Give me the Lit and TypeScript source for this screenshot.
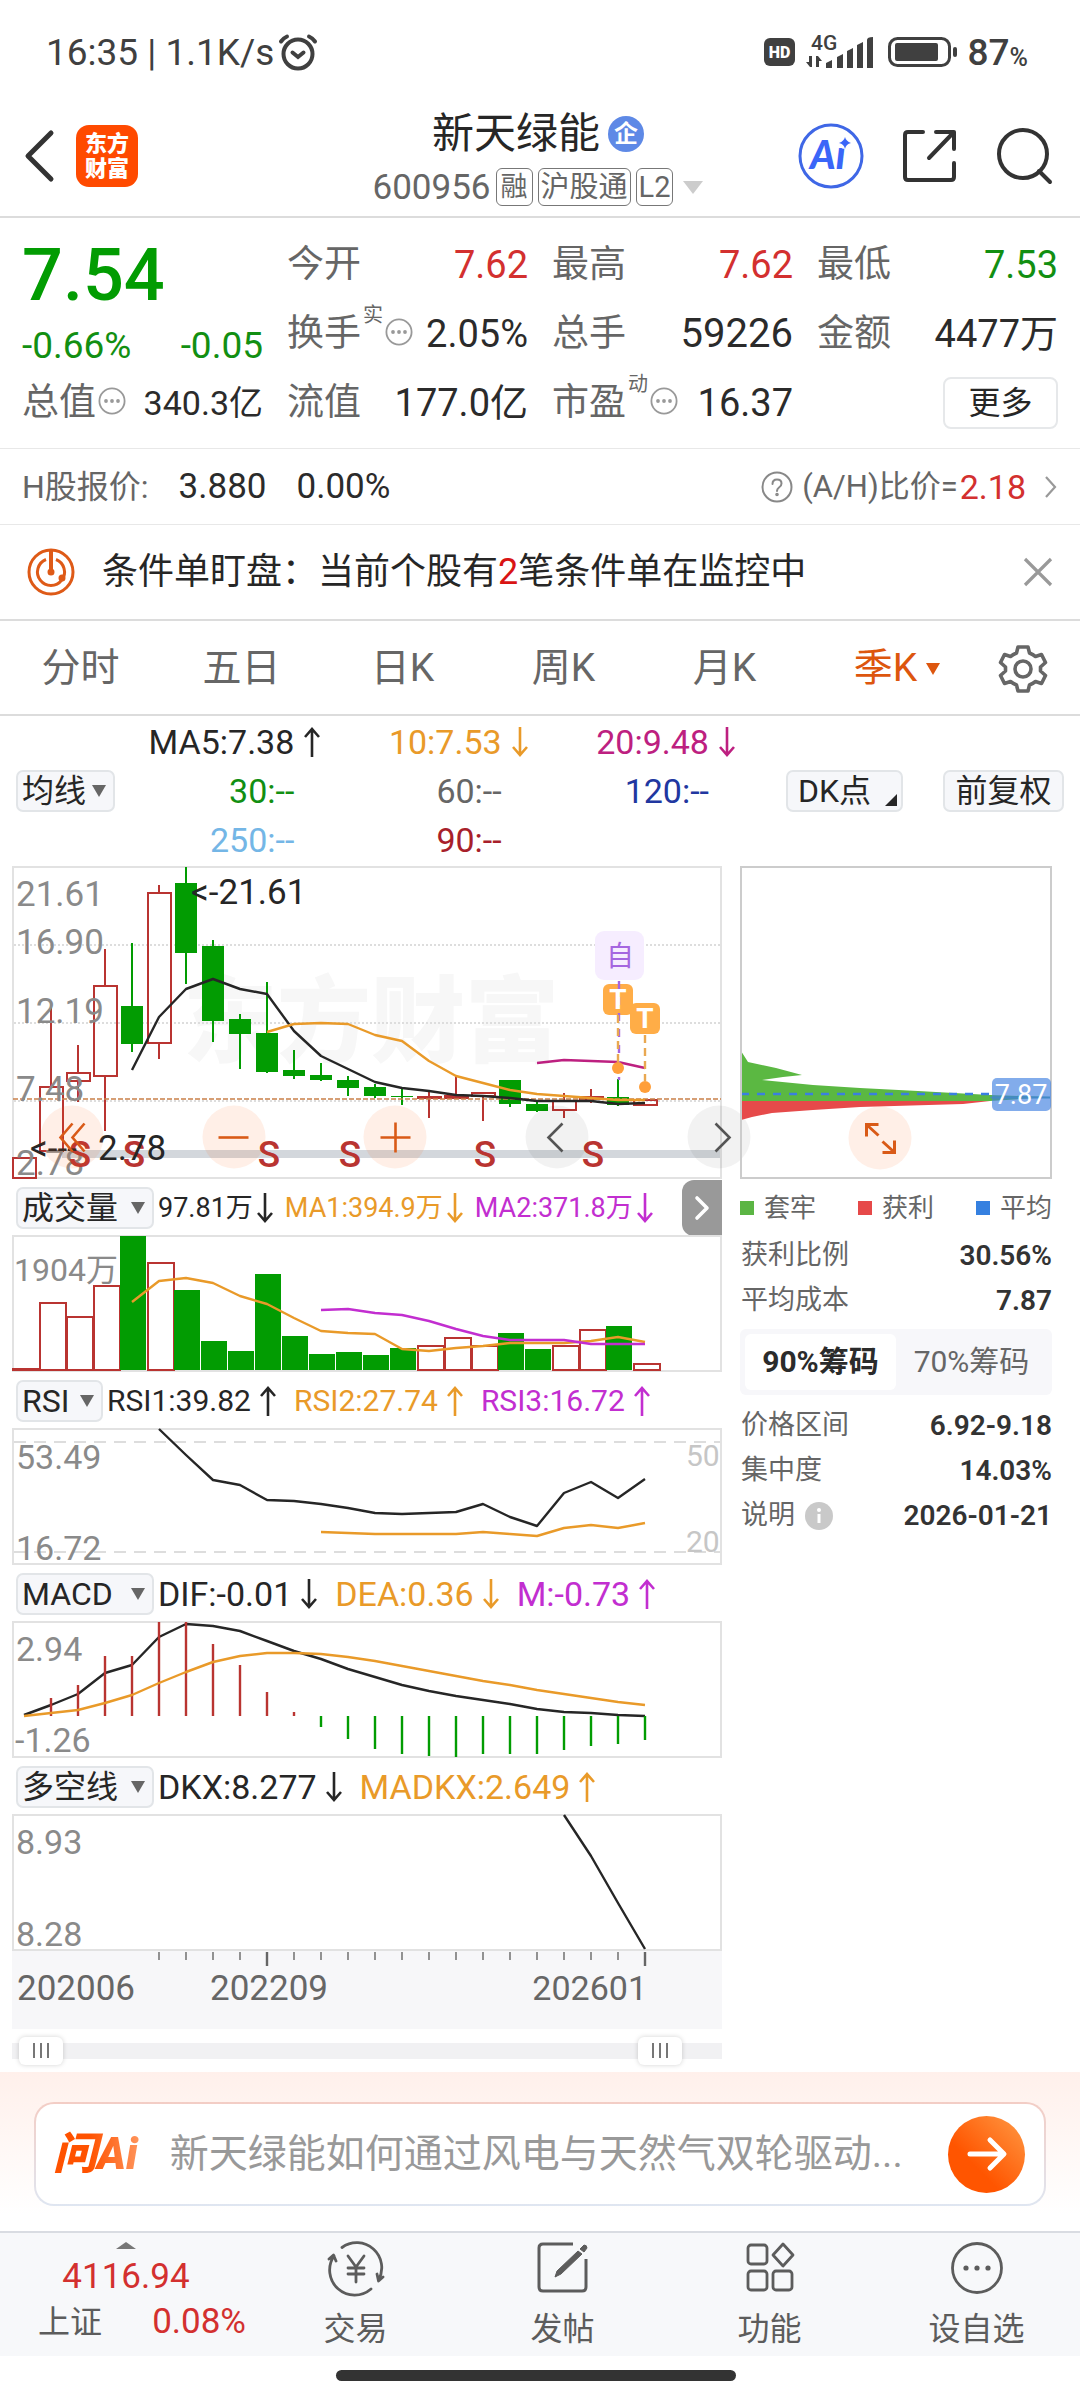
import { LitElement, html, svg, css } from 'lit';
import { customElement, state } from 'lit/decorators.js';
import { classMap } from 'lit/directives/class-map.js';

const RED = '#b93431';
const GREEN = '#029c02';
const INK = '#262626';
const ORANGE = '#e99a29';
const MAGENTA = '#bd2080';
const VIOLET = '#c22ed0';

const STEP = 27;
const cx = (i: number) => 24 + STEP * i;

const polyline = (start: number, ys: number[], color: string) => svg`
  <polyline fill="none" stroke=${color} stroke-width="2.4" stroke-linejoin="round"
    points=${ys.map((y, k) => `${cx(start + k)},${y}`).join(' ')}></polyline>`;

/* direction, high, body top, body bottom, low (chart units) */
type Candle = ['r' | 'g', number, number, number, number];
const CANDLES: Candle[] = [
  ['r', 1158, 1158, 1178, 1178],
  ['r', 1004, 1087, 1151, 1151],
  ['r', 1045, 1073, 1081, 1102],
  ['r', 949, 986, 1076, 1131],
  ['g', 943, 1006, 1044, 1052],
  ['r', 885, 893, 1043, 1059],
  ['g', 867, 883, 953, 984],
  ['g', 940, 946, 1021, 1042],
  ['g', 1014, 1019, 1034, 1069],
  ['g', 982, 1033, 1072, 1073],
  ['g', 1050, 1070, 1076, 1079],
  ['g', 1063, 1075, 1080, 1081],
  ['g', 1076, 1080, 1088, 1096],
  ['g', 1084, 1087, 1096, 1098],
  ['g', 1088, 1096, 1097, 1105],
  ['r', 1092, 1097, 1098, 1118],
  ['r', 1076, 1096, 1098, 1099],
  ['r', 1092, 1093, 1096, 1121],
  ['g', 1080, 1080, 1104, 1107],
  ['g', 1101, 1104, 1111, 1112],
  ['r', 1093, 1101, 1110, 1118],
  ['r', 1089, 1097, 1099, 1103],
  ['g', 1079, 1097, 1105, 1106],
  ['r', 1100, 1100, 1105, 1105],
];
const MA5 = [1070, 1017, 989, 979, 989, 994, 1031, 1056, 1069, 1082, 1088, 1091, 1095, 1096, 1098, 1101, 1101, 1101, 1104, 1103];
const MA10 = [1032, 1024, 1023, 1024, 1035, 1041, 1061, 1076, 1083, 1090, 1094, 1096, 1098, 1100, 1100];
const MA20 = [1063, 1060, 1061, 1062, 1068];

const VOLUME: ['r' | 'g', number][] = [
  ['r', 1369], ['r', 1303], ['r', 1317], ['r', 1286], ['g', 1236], ['r', 1263],
  ['g', 1290], ['g', 1341], ['g', 1351], ['g', 1274], ['g', 1336], ['g', 1354],
  ['g', 1352], ['g', 1355], ['g', 1348], ['r', 1346], ['r', 1338], ['r', 1346],
  ['g', 1333], ['g', 1349], ['r', 1346], ['r', 1330], ['g', 1326], ['r', 1364],
];
const VMA1 = [1302, 1281, 1278, 1283, 1296, 1304, 1318, 1331, 1333, 1334, 1349, 1351, 1348, 1346, 1343, 1343, 1343, 1341, 1337, 1342];
const VMA2 = [1310, 1309, 1313, 1315, 1321, 1329, 1336, 1340, 1340, 1340, 1344, 1344, 1344];

const RSI1 = [1429, 1455, 1480, 1485, 1500, 1501, 1504, 1508, 1513, 1514, 1513, 1512, 1504, 1517, 1526, 1493, 1482, 1498, 1479];
const RSI2 = [1532, 1533, 1534, 1534, 1534, 1534, 1532, 1534, 1536, 1528, 1525, 1528, 1523];

const HIST = [1716, 1698, 1685, 1656, 1656, 1622, 1622, 1644, 1665, 1692, 1712, 1727, 1739, 1749, 1754, 1756, 1757, 1754, 1754, 1754, 1750, 1746, 1744, 1740];
const DIF = [1715, 1705, 1694, 1673, 1665, 1637, 1624, 1626, 1631, 1641, 1651, 1659, 1669, 1677, 1685, 1691, 1696, 1700, 1704, 1709, 1712, 1713, 1715, 1716];
const DEA = [1716, 1713, 1710, 1703, 1695, 1683, 1672, 1662, 1656, 1653, 1653, 1654, 1657, 1661, 1666, 1671, 1676, 1681, 1685, 1690, 1694, 1698, 1702, 1705];

interface Reading { text: string; dir: 'up' | 'down'; color: string }

const arrow = (dir: 'up' | 'down') => html`
  <svg class="arrow" viewBox="0 0 16 32" aria-hidden="true">
    <path fill="none" stroke="currentColor" stroke-width="2.6"
      d=${dir === 'up' ? 'M8 31V3M1 11L8 3L15 11' : 'M8 1V29M1 21L8 29L15 21'}></path>
  </svg>`;

const dots = html`
  <svg class="dots" viewBox="0 0 28 28" aria-hidden="true">
    <circle cx="14" cy="14" r="12.6" fill="none" stroke="#999" stroke-width="1.8"></circle>
    <circle cx="8" cy="14" r="1.9" fill="#999"></circle>
    <circle cx="14" cy="14" r="1.9" fill="#999"></circle>
    <circle cx="20" cy="14" r="1.9" fill="#999"></circle>
  </svg>`;

@customElement('app-root')
export class AppRoot extends LitElement {
  @state() private period = '季K';
  @state() private share = '90';

  static styles = css`
    :host {
      display: block;
      background: #fff;
      color: #262626;
      font-family: Roboto, 'Noto Sans CJK SC', sans-serif;
      font-size: 32px;
      line-height: 1;
    }
    * { box-sizing: border-box; }
    button, select, input {
      font: inherit;
      color: inherit;
      margin: 0;
      padding: 0;
      border: 0;
      background: none;
    }
    svg { display: block; flex: none; overflow: visible; }
    a { color: inherit; text-decoration: none; }
    dl, dd, dt, h1, p { margin: 0; font-weight: 400; }
    .red { color: #d3302f; }
    .green { color: #128f12; }

    .status {
      display: flex;
      align-items: center;
      height: 104px;
      padding: 0 52px 0 46px;
      color: #404040;
      font-size: 38px;
      font-weight: 500;
    }
    .status .clock { font-size: 37px; font-weight: 400; }
    .status .alarm { width: 40px; height: 40px; margin-left: 4px; }
    .status .radio { width: 196px; height: 36px; margin-left: auto; }
    .status .battery { margin-left: 8px; font-size: 37px; }
    .status small { font-size: 25px; padding-top: 10px; }

    .header {
      display: grid;
      grid-template-columns: 1fr auto 1fr;
      align-items: center;
      height: 114px;
      padding: 0 28px 8px 24px;
      border-bottom: 2px solid #dcdcdc;
    }
    .header .start, .header .end { display: flex; align-items: center; }
    .header .start { gap: 20px; }
    .header .end { justify-content: flex-end; gap: 39px; }
    .logo {
      display: grid;
      place-content: center;
      width: 62px;
      height: 62px;
      border-radius: 13px;
      background: #ff4a00;
      color: #fff;
      font-size: 22px;
      line-height: 25px;
      font-weight: 900;
    }
    .title { display: flex; align-items: center; justify-content: center; gap: 8px; }
    .title h1 { font-size: 42px; line-height: 56px; }
    .badge {
      display: grid;
      place-content: center;
      width: 36px;
      height: 36px;
      border-radius: 50%;
      background: #5e89e6;
      color: #fff;
      font-size: 24px;
      font-weight: 700;
    }
    .code {
      display: flex;
      align-items: center;
      justify-content: center;
      gap: 5px;
      margin-top: 6px;
      color: #666;
      font-size: 35px;
    }
    .tag {
      height: 38px;
      padding: 0 4px;
      border: 1px solid #777;
      border-radius: 6px;
      font-size: 27px;
      line-height: 36px;
    }
    .tag.wide { font-size: 29px; padding: 0 2px; }
    .code svg { margin-left: 5px; }

    .quote {
      display: grid;
      grid-template-columns: repeat(4, 1fr);
      grid-auto-rows: 69px;
      column-gap: 24px;
      padding: 12px 22px 11px;
      border-bottom: 1px solid #e8e8e8;
    }
    .quote .lead { grid-row: 1 / 4; display: grid; grid-template-rows: 92px 46px 69px; align-items: center; }
    .price { font-size: 72px; font-weight: 500; color: #029c02; }
    .change { display: flex; justify-content: space-between; font-size: 37px; }
    .cell { display: flex; align-items: center; justify-content: space-between; font-size: 40px; }
    .cell dt { display: flex; align-items: center; color: #666; font-size: 37px; }
    .cell dd { color: #2b2b2b; }
    .cell dd.red { color: #d3302f; }
    .cell dd.green { color: #128f12; }
    .cell dd.tight { font-size: 34px; }
    .cell dd.snug { font-size: 38px; }
    .cell sup { align-self: flex-start; font-size: 20px; line-height: 20px; margin: -10px 0 0 2px; vertical-align: top; }
    .dots { width: 28px; height: 28px; margin: 0 0 4px 2px; }
    .more {
      justify-self: end;
      align-self: center;
      width: 115px;
      height: 52px;
      border: 2px solid #e6e8ea;
      border-radius: 8px;
      font-size: 32px;
    }

    .hshare {
      display: flex;
      align-items: center;
      height: 76px;
      padding: 0 22px;
      border-bottom: 1px solid #e8e8e8;
      color: #666;
      font-size: 32px;
    }
    .hshare b { font-weight: 400; font-size: 35px; color: #2b2b2b; margin-left: 30px; }
    .hshare a { display: flex; align-items: center; margin-left: auto; font-size: 31px; }
    .hshare a b { font-size: 34px; color: #d3302f; margin: 0 18px 0 2px; }
    .hshare .help { margin-right: 9px; }

    .notice {
      display: flex;
      align-items: center;
      height: 96px;
      padding: 0 28px 0 27px;
      border-bottom: 2px solid #dcdcdc;
      font-size: 36px;
    }
    .notice p { margin: 0 auto 0 27px; }
    .notice em { font-style: normal; color: #d91414; }

    .tabs {
      display: grid;
      grid-template-columns: repeat(6, 1fr) 114px;
      height: 95px;
      padding-top: 2px;
      border-bottom: 2px solid #dcdcdc;
      color: #666;
      font-size: 39px;
    }
    .tabs button { position: relative; display: flex; align-items: center; justify-content: center; cursor: pointer; }
    .tabs .on { color: #dd560e; }
    .tabs .on svg { position: absolute; right: 26px; }

    .averages {
      display: flex;
      align-items: center;
      height: 150px;
      padding: 0 16px;
    }
    .averages ul {
      flex: 1;
      display: grid;
      grid-template-columns: repeat(3, 1fr);
      grid-auto-rows: 49px;
      align-items: center;
      margin: 0 49px 0 0;
      padding: 0;
      list-style: none;
      font-size: 34px;
    }
    .averages li { display: flex; align-items: center; justify-content: flex-end; padding-right: 28px; }
    .averages li.moving { padding-right: 2px; }
    .arrow { width: 16px; height: 32px; margin-left: 10px; }
    .chip {
      position: relative;
      height: 42px;
      border: 2px solid #e2e5e8;
      border-radius: 7px;
      background: #f6f7fa;
      font-size: 32px;
      line-height: 36px;
      white-space: nowrap;
    }
    .chip.dk { width: 117px; padding-right: 20px; margin-right: 40px; }
    .chip.dk svg { position: absolute; right: 4px; bottom: 4px; }
    .chip.fq { width: 121px; }
    .drop { position: relative; display: flex; align-items: center; }
    .drop select {
      appearance: none;
      width: 100%;
      height: 42px;
      padding: 0 0 0 4px;
      border: 2px solid #e2e5e8;
      border-radius: 7px;
      background: #f6f7fa;
      font-size: 32px;
      line-height: 38px;
    }
    .drop svg { position: absolute; right: 9px; pointer-events: none; }
    .drop.s { width: 87px; }
    .drop.m { width: 99px; }
    .drop.l { width: 138px; }

    .board {
      display: grid;
      grid-template-columns: 710fr 312fr;
      column-gap: 18px;
      align-items: start;
      padding: 0 28px 0 12px;
    }
    .plot { width: 100%; height: auto; }
    .stage { position: relative; z-index: 1; }
    .knob {
      position: absolute;
      display: grid;
      place-content: center;
      width: 63px;
      height: 63px;
      border-radius: 50%;
      transform: translate(-50%, -50%);
      background: rgba(255, 96, 20, 0.1);
      color: #d95a17;
      cursor: pointer;
    }
    .knob.grey { background: rgba(0, 0, 0, 0.05); color: #555; }
    .chips .knob { left: 45%; top: 87%; }

    .panel-head { display: flex; align-items: center; height: 56px; padding: 2px 0 0 4px; font-size: 34px; }
    .reading { display: flex; align-items: center; margin-right: 18px; white-space: nowrap; }
    .drop + .reading { margin-left: 4px; }
    .panel-head .arrow { margin-left: 9px; }
    .panel-head.medium { font-size: 30px; }
    .panel-head.compact { font-size: 27px; }
    .compact .reading { margin-right: 12px; }
    .compact .arrow { margin-left: 4px; }
    .next {
      display: grid;
      place-content: center;
      width: 40px;
      height: 56px;
      margin-left: auto;
      border-radius: 12px 0 0 12px;
      background: #999;
    }

    .range { display: grid; align-items: center; height: 43px; background: linear-gradient(#f1f1f3, #f1f1f3) center / 100% 16px no-repeat; border-radius: 8px; }
    .range input {
      grid-area: 1 / 1;
      appearance: none;
      width: 100%;
      height: 28px;
      pointer-events: none;
    }
    .range input::-webkit-slider-thumb {
      appearance: none;
      pointer-events: auto;
      width: 44px;
      height: 28px;
      border-radius: 6px;
      background:
        linear-gradient(#777, #777) 14px center / 2px 15px no-repeat,
        linear-gradient(#777, #777) 21px center / 2px 15px no-repeat,
        linear-gradient(#777, #777) 28px center / 2px 15px no-repeat,
        #fff;
      box-shadow: 0 0 5px rgba(0, 0, 0, 0.18);
    }

    .chips .legend { display: flex; justify-content: space-between; align-items: center; height: 53px; padding-top: 4px; color: #666; font-size: 26px; }
    .legend span { display: flex; align-items: center; gap: 10px; }
    .legend i { width: 14px; height: 14px; }
    .legend .trapped { background: #5bb544; }
    .legend .profit { background: #e64949; }
    .legend .mean { background: #3580e0; }
    .facts div { display: flex; align-items: center; justify-content: space-between; height: 45px; padding-top: 2px; }
    .facts dt { display: flex; align-items: center; gap: 10px; padding-left: 1px; color: #666; font-size: 27px; }
    .facts dd { font-size: 28px; font-weight: 600; color: #333; }
    .switch {
      display: grid;
      grid-template-columns: 150fr 150fr;
      height: 66px;
      margin: 7px 0;
      padding: 5px;
      border-radius: 6px;
      background: #f7f7fa;
      color: #666;
      font-size: 30px;
    }
    .switch button { border-radius: 6px; white-space: nowrap; }
    .switch .on { background: #fff; color: #2b2b2b; font-weight: 700; }

    .ask { height: 159px; padding: 30px 34px 0; background: linear-gradient(#fff0eb, #fff 90%); }
    .ask form {
      display: flex;
      align-items: center;
      height: 104px;
      padding: 0 19px 0 17px;
      border: 2px solid transparent;
      border-radius: 20px;
      background: linear-gradient(#fff, #fff) padding-box, linear-gradient(#f3cdc5, #dfe6f1) border-box;
    }
    .wordmark {
      padding-right: 6px;
      font-size: 44px;
      line-height: 52px;
      font-weight: 900;
      font-style: italic;
      background: linear-gradient(90deg, #ff5200 40%, #ff9a63);
      background-clip: text;
      -webkit-background-clip: text;
      color: transparent;
    }
    .ask input { flex: 1; min-width: 0; height: 60px; margin: 0 20px 0 26px; font-size: 39px; outline: 0; }
    .ask input::placeholder { color: #999; opacity: 1; }
    .send {
      display: grid;
      place-content: center;
      width: 77px;
      height: 77px;
      border-radius: 50%;
      background: linear-gradient(225deg, #ff9a45, #ff5500 65%);
    }

    .nav {
      display: grid;
      grid-template-columns: 252fr repeat(4, 207fr);
      height: 125px;
      border-top: 2px solid #d9dce2;
      background: #f7f8fa;
      color: #5c5c5c;
      font-size: 32px;
    }
    .nav a { display: flex; flex-direction: column; align-items: center; padding-top: 7px; }
    .nav a > svg { width: 56px; height: 56px; margin-bottom: 17px; }
    .nav .index > svg { width: 20px; height: 7px; margin: 2px 0 10px; }
    .index b { font-weight: 400; font-size: 35px; color: #d3302f; }
    .index span { display: flex; align-self: flex-end; justify-content: space-between; align-items: center; width: 214px; margin-top: 10px; padding-right: 6px; }
    .home { display: flex; justify-content: center; align-items: flex-start; height: 44px; padding: 14px 8px 0 0; }
    .home i { width: 400px; height: 11px; border-radius: 6px; background: #333; }
  `;

  private caret(color: string) {
    return html`<svg width="14" height="12" viewBox="0 0 14 12" aria-hidden="true"><path fill=${color} d="M0 0H14L7 12Z"></path></svg>`;
  }

  private drop(label: string, size: string) {
    return html`
      <label class="drop ${size}">
        <select aria-label="${label}"><option>${label}</option></select>
        ${this.caret('#666')}
      </label>`;
  }

  private readings(items: Reading[]) {
    return items.map(
      (r) => html`<span class="reading" style="color:${r.color}">${r.text}${arrow(r.dir)}</span>`,
    );
  }

  private frame(y: number, h: number) {
    return svg`<rect x="13" y=${y + 1} width="708" height=${h - 2} fill="none" stroke="#e2e2e2" stroke-width="2"></rect>`;
  }

  private label(x: number, y: number, text: string, size = 34, fill = '#8a8a8a') {
    return svg`<text x=${x} y=${y} font-size=${size} fill=${fill}>${text}</text>`;
  }

  private renderStatus() {
    return html`
      <div class="status">
        <span class="clock">16:35 | 1.1K/s</span>
        <svg class="alarm" viewBox="0 0 40 40" fill="none" stroke="#404040" stroke-linecap="round" aria-hidden="true">
          <circle cx="20" cy="22" r="14.5" stroke-width="4"></circle>
          <path stroke-width="4" d="M14.500 20.500L20 25L25.500 20.500M3 9.500Q5.500 6 9 4.500M37 9.500Q34.500 6 31 4.500"></path>
        </svg>
        <svg class="radio" viewBox="0 0 196 36" aria-hidden="true">
          <rect x="0" y="4" width="31" height="28" rx="6" fill="#404040"></rect>
          <text x="15.500" y="24" font-size="16" font-weight="900" text-anchor="middle" fill="#fff">HD</text>
          <text x="47" y="16" font-size="21" fill="#404040">4G</text>
          <g fill="#404040">
            <path d="M48 22v11h-2l-4-5h3v-6zM52 33V22h2l4 5h-3v6z"></path>
            <path d="M62 34v-5l6-3v8zM73 34V23l6-3v14zM83 34V17l6-3v20zM93 34V11l6-3v26zM103 34V6q0-3 6-3v31z"></path>
            <rect x="131" y="9" width="43" height="18" rx="2"></rect>
            <rect x="189" y="13" width="4" height="10" rx="2"></rect>
          </g>
          <rect x="125.500" y="4.500" width="60" height="27" rx="8" fill="none" stroke="#404040" stroke-width="3"></rect>
        </svg>
        <span class="battery">87</span><small>%</small>
      </div>`;
  }

  private renderHeader() {
    return html`
      <header class="header">
        <div class="start">
          <button aria-label="返回">
            <svg width="32" height="54" viewBox="0 0 32 54"><path fill="none" stroke="#333" stroke-width="5" stroke-linecap="round" stroke-linejoin="round" d="M27 4L4 27L27 50"></path></svg>
          </button>
          <a class="logo" href="#home"><span>东方</span><span>财富</span></a>
        </div>
        <div>
          <div class="title"><h1>新天绿能</h1><span class="badge">企</span></div>
          <div class="code">
            <span>600956</span><span class="tag">融</span><span class="tag wide">沪股通</span><span class="tag wide">L2</span>
            <svg width="20" height="13" viewBox="0 0 20 13" aria-hidden="true"><path fill="#ccc" d="M0 0H20L10 13Z"></path></svg>
          </div>
        </div>
        <div class="end">
          <button aria-label="Ai">
            <svg width="66" height="66" viewBox="0 0 66 66">
              <circle cx="33" cy="33" r="31" fill="none" stroke="#3f67e6" stroke-width="3"></circle>
              <text x="12" y="46" font-family="Lato, Roboto, sans-serif" font-size="39" font-weight="900" font-style="italic" fill="#3a66f8">Ai</text>
              <circle cx="47" cy="19" r="7" fill="#fff"></circle>
              <path fill="#3a66f8" d="M47 14q1 4 6 6q-5 1-6 6q-1-5-6-6q5-2 6-6z"></path>
            </svg>
          </button>
          <button aria-label="分享">
            <svg width="54" height="54" viewBox="0 0 54 54" fill="none" stroke="#333" stroke-width="4" stroke-linecap="round" stroke-linejoin="round">
              <path d="M20 3H5Q2 3 2 6V48Q2 51 5 51H48Q51 51 51 48V34M33 3H51V20M51 3L26 29"></path>
            </svg>
          </button>
          <button aria-label="搜索">
            <svg width="56" height="56" viewBox="0 0 56 56" fill="none" stroke="#333" stroke-width="4" stroke-linecap="round">
              <circle cx="27" cy="26" r="24"></circle><path d="M43 43L54 54"></path>
            </svg>
          </button>
        </div>
      </header>`;
  }

  private cell(label: string, value: string, tone = '', note = '', info = false) {
    return html`
      <div class="cell">
        <dt>${label}${note ? html`<sup>${note}</sup>` : ''}${info ? dots : ''}</dt>
        <dd class=${tone}>${value}</dd>
      </div>`;
  }

  private renderQuote() {
    return html`
      <dl class="quote">
        <div class="lead">
          <div class="price">7.54</div>
          <div class="change green"><span>-0.66%</span><span>-0.05</span></div>
          ${this.cell('总值', '340.3亿', 'tight', '', true)}
        </div>
        ${this.cell('今开', '7.62', 'snug red')}
        ${this.cell('最高', '7.62', 'snug red')}
        ${this.cell('最低', '7.53', 'snug green')}
        ${this.cell('换手', '2.05%', 'snug', '实', true)}
        ${this.cell('总手', '59226')}
        ${this.cell('金额', '4477万', 'snug')}
        ${this.cell('流值', '177.0亿', 'snug')}
        ${this.cell('市盈', '16.37', 'snug', '动', true)}
        <button class="more">更多</button>
      </dl>
      <div class="hshare">
        <span>H股报价:</span><b>3.880</b><b>0.00%</b>
        <a href="#ah">
          <svg class="help" width="32" height="32" viewBox="0 0 32 32" fill="none" stroke="#888" stroke-width="2" aria-hidden="true">
            <circle cx="16" cy="16" r="14.500"></circle>
            <path stroke-linecap="round" d="M11.500 13Q11.500 8.500 16 8.500T20.500 12.500Q20.500 15 18 16.500Q16 18 16 20"></path>
            <circle cx="16" cy="23.500" r="0.800"></circle>
          </svg>
          <span>(A/H)比价=</span><b>2.18</b>
          <svg width="14" height="24" viewBox="0 0 14 24" aria-hidden="true"><path fill="none" stroke="#999" stroke-width="2.200" d="M2 2L11 12L2 22"></path></svg>
        </a>
      </div>
      <div class="notice">
        <svg width="48" height="48" viewBox="0 0 48 48" fill="none" stroke="#de5a17" aria-hidden="true">
          <circle cx="24" cy="24" r="22" stroke-width="3"></circle>
          <path stroke-width="3" d="M19 11.500A13.500 13.500 0 1 0 29 11.500"></path>
          <path stroke-width="4" d="M24 3V24"></path>
          <circle cx="24" cy="24" r="2.500" fill="#de5a17" stroke-width="2"></circle>
          <circle cx="35" cy="30" r="2.500" fill="#de5a17" stroke-width="2"></circle>
        </svg>
        <p>条件单盯盘：当前个股有<em>2</em>笔条件单在监控中</p>
        <button aria-label="关闭">
          <svg width="28" height="28" viewBox="0 0 28 28"><path stroke="#999" stroke-width="3.200" d="M1 1L27 27M27 1L1 27"></path></svg>
        </button>
      </div>`;
  }

  private renderTabs() {
    const names = ['分时', '五日', '日K', '周K', '月K', '季K'];
    return html`
      <nav class="tabs">
        ${names.map((n) => html`
          <button class=${classMap({ on: n === this.period })} @click=${() => (this.period = n)}>
            ${n}${n === '季K' ? this.caret('currentColor') : ''}
          </button>`)}
        <button aria-label="设置">
          <svg width="50" height="50" viewBox="0 0 50 50" fill="none" stroke="#666" stroke-width="3.600" stroke-linejoin="round">
            <path d="M20 3H30L31.500 9Q35 10.500 37.500 12.500L43.500 10.500L47.500 18.500L42.500 23V27L47.500 31.500L43.500 39.500L37.500 37.500Q35 39.500 31.500 41L30 47H20L18.500 41Q15 39.500 12.500 37.500L6.500 39.500L2.500 31.500L7.500 27V23L2.500 18.500L6.500 10.500L12.500 12.500Q15 10.500 18.500 9Z"></path>
            <circle cx="25" cy="25" r="8"></circle>
          </svg>
        </button>
      </nav>
      <div class="averages">
        ${this.drop('均线', 'm')}
        <ul>
          <li class="moving">MA5:7.38${arrow('up')}</li>
          <li class="moving" style="color:${ORANGE}">10:7.53${arrow('down')}</li>
          <li class="moving" style="color:${MAGENTA}">20:9.48${arrow('down')}</li>
          <li class="green">30:--</li>
          <li style="color:#666">60:--</li>
          <li style="color:#2137a0">120:--</li>
          <li style="color:#74b6e6">250:--</li>
          <li style="color:#a81f2b">90:--</li>
        </ul>
        <button class="chip dk">DK点<svg width="12" height="12" viewBox="0 0 12 12" aria-hidden="true"><path fill="#262626" d="M12 0V12H0Z"></path></svg></button>
        <button class="chip fq">前复权</button>
      </div>`;
  }

  private renderCandles() {
    return svg`${CANDLES.map(([d, hi, top, bot, lo], i) => {
      const x = cx(i);
      return d === 'g'
        ? svg`<path stroke=${GREEN} stroke-width="2" d="M${x} ${hi}V${lo}"></path>
              <rect x=${x - 11} y=${top} width="22" height=${bot - top} fill=${GREEN}></rect>`
        : svg`<path stroke=${RED} stroke-width="2" d="M${x} ${hi}V${top}M${x} ${bot}V${lo}"></path>
              <rect x=${x - 11} y=${top} width="23" height=${bot - top} fill="none" stroke=${RED} stroke-width="2"></rect>`;
    })}`;
  }

  private renderMain() {
    const knobs = [
      { x: 8.5, name: '最早', grey: false, d: 'M16 2L4 16L16 30M28 2L16 16L28 30' },
      { x: 31.2, name: '缩小', grey: false, d: 'M1 16H31' },
      { x: 54, name: '放大', grey: false, d: 'M1 16H31M16 1V31' },
      { x: 76.7, name: '向前', grey: true, d: 'M22 2L8 16L22 30' },
      { x: 99.6, name: '向后', grey: true, d: 'M12 2L26 16L12 30' },
    ];
    return html`
      <div class="stage">
        <svg class="plot" viewBox="12 866 710 313">
          <text x="183" y="1055" font-size="94" font-weight="900" fill="#f7f7f7">东方财富</text>
          <g stroke="#ddd" stroke-width="2" stroke-dasharray="2 2">
            <path d="M14 945H720M14 1023H720M14 1101H720"></path>
          </g>
          <rect x="62" y="1150" width="660" height="8" fill="#d3d7dc"></rect>
          ${this.frame(866, 313)}
          ${this.renderCandles()}
          <path stroke="#c9804a" stroke-width="1.500" stroke-dasharray="5 2" d="M13 1099H721"></path>
          ${polyline(4, MA5, INK)}
          ${polyline(9, MA10, ORANGE)}
          ${polyline(19, MA20, MAGENTA)}
          ${this.label(16, 906, '21.61', 35)}
          ${this.label(16, 954, '16.90', 35)}
          ${this.label(16, 1023, '12.19', 35)}
          ${this.label(16, 1101, '7.48', 35)}
          ${this.label(16, 1175, '2.78', 35)}
          ${[80, 134, 269, 350, 485, 593].map((x) => svg`<text x=${x} y="1167" text-anchor="middle" font-size="37" font-weight="500" fill=${RED}>S</text>`)}
          <text x="191" y="904" font-size="35" fill=${INK}>&lt;-21.61</text>
          <text x="30" y="1160" font-size="35" fill=${INK}>&lt;---<tspan x="98">2.78</tspan></text>
          <rect x="595" y="931" width="49" height="49" rx="9" fill="#f6edff"></rect>
          <text x="620" y="966" text-anchor="middle" font-size="28" fill="#a566e0">自</text>
          <rect x="603" y="984" width="30" height="31" rx="6" fill="#ffad47"></rect>
          <rect x="630" y="1003" width="30" height="31" rx="6" fill="#ffad47"></rect>
          <path stroke="#a566e0" stroke-width="2.400" stroke-dasharray="8 8" d="M619 981V1080"></path>
          <text x="618" y="1009" text-anchor="middle" font-size="28" font-weight="700" fill="#fff">T</text>
          <text x="645" y="1028" text-anchor="middle" font-size="28" font-weight="700" fill="#fff">T</text>
          <path stroke="#e9a851" stroke-width="2.400" stroke-dasharray="8 5" d="M618 1015V1062M645 1035V1081"></path>
          <circle cx="618" cy="1068" r="6" fill="#ff9f3a"></circle>
          <circle cx="645" cy="1087" r="6" fill="#ff9f3a"></circle>
        </svg>
        ${knobs.map((k) => html`
          <button class=${classMap({ knob: true, grey: k.grey })} aria-label=${k.name} style="left:${k.x}%;top:86.6%">
            <svg width="32" height="32" viewBox="0 0 32 32"><path fill="none" stroke="currentColor" stroke-width="2.600" d=${k.d}></path></svg>
          </button>`)}
      </div>`;
  }

  private renderIndicators() {
    return html`
      <div class="panel-head compact">
        ${this.drop('成交量', 'l')}
        ${this.readings([
          { text: '97.81万', dir: 'down', color: INK },
          { text: 'MA1:394.9万', dir: 'down', color: ORANGE },
          { text: 'MA2:371.8万', dir: 'down', color: VIOLET },
        ])}
        <button class="next" aria-label="更多指标">
          <svg width="16" height="26" viewBox="0 0 16 26"><path fill="none" stroke="#fff" stroke-width="3.600" stroke-linecap="round" stroke-linejoin="round" d="M3 3L13 13L3 23"></path></svg>
        </button>
      </div>
      <svg class="plot" viewBox="12 1235 710 137">
        ${this.frame(1235, 137)}
        ${this.label(14, 1281, '1904万', 32)}
        ${VOLUME.map(([d, top], i) => d === 'g'
          ? svg`<rect x=${cx(i) - 12} y=${top} width="26" height=${1370 - top} fill=${GREEN}></rect>`
          : svg`<rect x=${cx(i) - 11} y=${top} width="26" height=${1370 - top} fill="none" stroke=${RED} stroke-width="2"></rect>`)}
        ${polyline(4, VMA1, ORANGE)}
        ${polyline(11, VMA2, VIOLET)}
      </svg>

      <div class="panel-head medium">
        ${this.drop('RSI', 's')}
        ${this.readings([
          { text: 'RSI1:39.82', dir: 'up', color: INK },
          { text: 'RSI2:27.74', dir: 'up', color: ORANGE },
          { text: 'RSI3:16.72', dir: 'up', color: VIOLET },
        ])}
      </div>
      <svg class="plot" viewBox="12 1428 710 137">
        ${this.frame(1428, 137)}
        <path stroke="#ddd" stroke-width="2" stroke-dasharray="12 8" d="M14 1442H720M14 1552H720"></path>
        ${this.label(16, 1469, '53.49')}
        ${this.label(16, 1560, '16.72')}
        ${this.label(686, 1466, '50', 30, '#c6c6c6')}
        ${this.label(686, 1552, '20', 30, '#c6c6c6')}
        ${polyline(5, RSI1, INK)}
        ${polyline(11, RSI2, ORANGE)}
      </svg>

      <div class="panel-head">
        ${this.drop('MACD', 'l')}
        ${this.readings([
          { text: 'DIF:-0.01', dir: 'down', color: INK },
          { text: 'DEA:0.36', dir: 'down', color: ORANGE },
          { text: 'M:-0.73', dir: 'up', color: VIOLET },
        ])}
      </div>
      <svg class="plot" viewBox="12 1621 710 137">
        ${this.frame(1621, 137)}
        ${this.label(16, 1661, '2.94')}
        ${this.label(15, 1752, '-1.26')}
        ${polyline(0, DIF, INK)}
        ${HIST.map((y, i) => svg`<path stroke=${y > 1716 ? GREEN : RED} stroke-width="2.400" d="M${cx(i)} 1716V${y}"></path>`)}
        ${polyline(0, DEA, ORANGE)}
      </svg>

      <div class="panel-head">
        ${this.drop('多空线', 'l')}
        ${this.readings([
          { text: 'DKX:8.277', dir: 'down', color: INK },
          { text: 'MADKX:2.649', dir: 'up', color: ORANGE },
        ])}
      </div>
      <svg class="plot" viewBox="12 1814 710 215">
        <rect x="12" y="1951" width="710" height="78" fill="#f7f7f9"></rect>
        ${this.frame(1814, 137)}
        ${this.label(16, 1854, '8.93')}
        ${this.label(16, 1946, '8.28')}
        ${polyline(20, [1815, 1856, 1903, 1949], INK)}
        ${Array.from({ length: 19 }, (_, k) => k + 5).map((i) => {
          const major = i === 9 || i === 23;
          return svg`<path stroke="#666" stroke-width=${major ? 2.4 : 1.4} d="M${cx(i)} 1952V${major ? 1966 : 1960}"></path>`;
        })}
        ${this.label(17, 2000, '202006', 35, '#666')}
        ${this.label(210, 2000, '202209', 35, '#666')}
        <text x="647" y="2000" text-anchor="end" font-size="34" fill="#666">202601</text>
      </svg>
      <div class="range">
        <input type="range" min="0" max="100" value="1" aria-label="起始时间" />
        <input type="range" min="0" max="100" value="94" aria-label="结束时间" />
      </div>`;
  }

  private renderChips() {
    const shares = [['90', '90%筹码'], ['70', '70%筹码']];
    return html`
      <section class="chips">
        <div class="stage">
          <svg class="plot" viewBox="740 866 312 313">
            <path fill="#5bb842" d="M741 1051L748 1062L776 1068L802 1075L783 1077L762 1080L813 1085L860 1088L918 1091L990 1095L1050 1097L990 1101H741Z"></path>
            <path fill="#e64a4a" d="M741 1101H990L963 1104L860 1107L813 1110L772 1113L752 1117L741 1120Z"></path>
            <path stroke="#3a7fe0" stroke-width="2.600" stroke-dasharray="8 8" d="M741 1094H992"></path>
            <path stroke="#4a9a9a" stroke-width="2" d="M990 1097.500H1050"></path>
            <rect x="741" y="867" width="310" height="311" fill="none" stroke="#ccc" stroke-width="2"></rect>
            <rect x="992" y="1078" width="59" height="33" rx="5" fill="#3f80e0" fill-opacity="0.650"></rect>
            <text x="1021" y="1104" text-anchor="middle" font-size="27" fill="#fff">7.87</text>
          </svg>
          <button class="knob" aria-label="展开">
            <svg width="32" height="32" viewBox="0 0 32 32"><path fill="none" stroke="currentColor" stroke-width="3" d="M14 13L3 3M2 14V2H14M18 19L29 29M30 18V30H18"></path></svg>
          </button>
        </div>
        <div class="legend">
          <span><i class="trapped"></i>套牢</span><span><i class="profit"></i>获利</span><span><i class="mean"></i>平均</span>
        </div>
        <dl class="facts">
          <div><dt>获利比例</dt><dd>30.56%</dd></div>
          <div><dt>平均成本</dt><dd>7.87</dd></div>
        </dl>
        <div class="switch">
          ${shares.map(([id, name]) => html`
            <button class=${classMap({ on: this.share === id })} @click=${() => (this.share = id)}>${name}</button>`)}
        </div>
        <dl class="facts">
          <div><dt>价格区间</dt><dd>6.92-9.18</dd></div>
          <div><dt>集中度</dt><dd>14.03%</dd></div>
          <div>
            <dt>说明
              <svg width="28" height="28" viewBox="0 0 28 28" aria-hidden="true"><circle cx="14" cy="14" r="14" fill="#c9c9c9"></circle><circle cx="14" cy="8" r="2" fill="#fff"></circle><path stroke="#fff" stroke-width="3" d="M14 12V21"></path></svg>
            </dt>
            <dd>2026-01-21</dd>
          </div>
        </dl>
      </section>`;
  }

  private renderFooter() {
    return html`
      <div class="ask">
        <form @submit=${(e: Event) => e.preventDefault()}>
          <span class="wordmark">问Ai</span>
          <input type="text" aria-label="提问" placeholder="新天绿能如何通过风电与天然气双轮驱动..." />
          <button class="send" aria-label="发送">
            <svg width="40" height="34" viewBox="0 0 40 34"><path fill="none" stroke="#fff" stroke-width="5" stroke-linecap="round" stroke-linejoin="round" d="M3 17H36M23 3L37 17L23 31"></path></svg>
          </button>
        </form>
      </div>
      <nav class="nav">
        <a class="index" href="#index">
          <svg viewBox="0 0 20 7" aria-hidden="true"><path fill="#777" d="M0 7L10 0L20 7Z"></path></svg>
          <b>4116.94</b>
          <span>上证<b>0.08%</b></span>
        </a>
        <a href="#trade">
          <svg viewBox="0 0 56 56" fill="none" stroke="#5c5c5c" stroke-width="2.800" stroke-linecap="round" stroke-linejoin="round" aria-hidden="true">
            <path d="M14 7.500A25 25 0 0 1 50.500 40M55 37L50.500 41L49 34M43 49A25 25 0 0 1 6 16M1 19L5.500 15L8 21"></path>
            <path d="M20 16L28 27L36 16M28 27V42M20 28H36M20 34H36"></path>
          </svg>交易
        </a>
        <a href="#post">
          <svg viewBox="0 0 56 56" fill="none" stroke="#5c5c5c" stroke-width="3" stroke-linejoin="round" aria-hidden="true">
            <path d="M38 4H8Q4 4 4 8V47Q4 51 8 51H47Q51 51 51 47V19"></path>
            <path fill="#5c5c5c" stroke-width="1" d="M43 11L47 14L26 34L20 37L22 31ZM45 9L49 5Q52 5 52 8L49 12Z"></path>
          </svg>发帖
        </a>
        <a href="#features">
          <svg viewBox="0 0 56 56" fill="none" stroke="#5c5c5c" stroke-width="2.800" stroke-linejoin="round" aria-hidden="true">
            <rect x="6" y="5" width="19" height="19" rx="3"></rect>
            <rect x="6" y="31" width="19" height="19" rx="3"></rect>
            <rect x="31" y="31" width="19" height="19" rx="3"></rect>
            <path d="M41 4L51 15L41 26L31 15Z"></path>
          </svg>功能
        </a>
        <a href="#watch">
          <svg viewBox="0 0 56 56" aria-hidden="true">
            <circle cx="28" cy="28" r="24.500" fill="none" stroke="#5c5c5c" stroke-width="2.800"></circle>
            <g fill="#5c5c5c"><circle cx="17" cy="28" r="2.600"></circle><circle cx="28" cy="28" r="2.600"></circle><circle cx="39" cy="28" r="2.600"></circle></g>
          </svg>设自选
        </a>
      </nav>
      <div class="home"><i></i></div>`;
  }

  render() {
    return html`
      ${this.renderStatus()}
      ${this.renderHeader()}
      ${this.renderQuote()}
      ${this.renderTabs()}
      <main class="board">
        <section>${this.renderMain()}${this.renderIndicators()}</section>
        ${this.renderChips()}
      </main>
      ${this.renderFooter()}`;
  }
}
